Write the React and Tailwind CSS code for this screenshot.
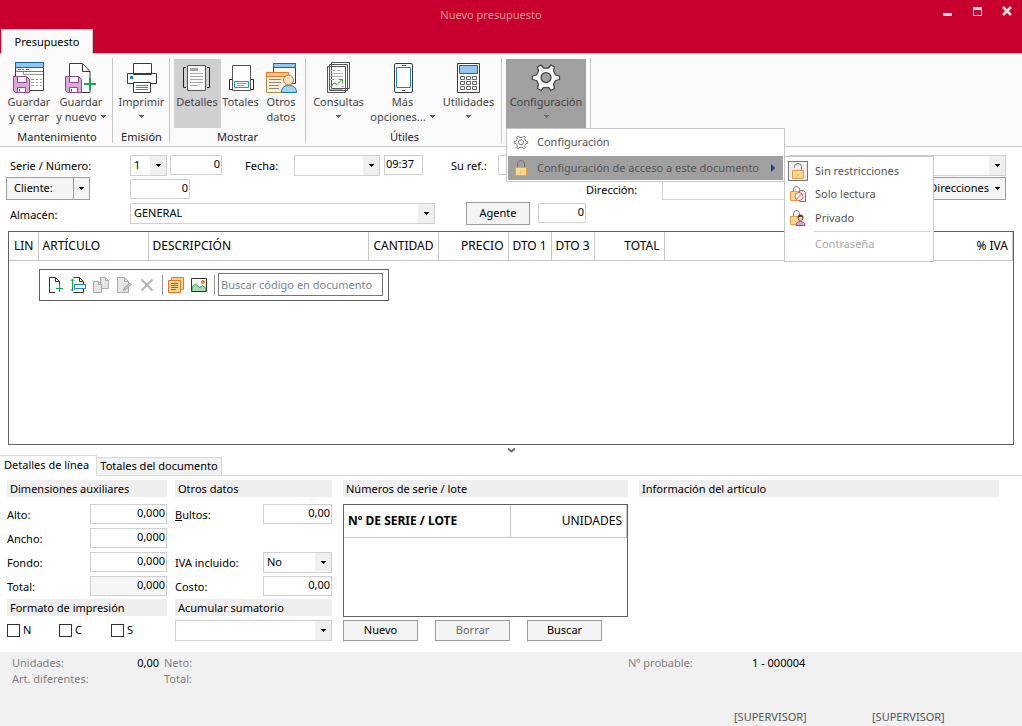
import React, { useState } from 'react';

const INK = '#3a3a3a';

const Caret = ({ className = '' }) => (
    <svg viewBox="0 0 5 3" className={`w-[5px] h-[3px] shrink-0 ${className}`} fill="currentColor" shapeRendering="crispEdges">
        <path d="M0 0h5v1H0zM1 1h3v1H1zM2 2h1v1H2z" />
    </svg>
);

// ---------- Iconos de la cinta (32px) ----------
const Icon32 = ({ children }) => (
    <svg viewBox="0 0 32 32" className="w-8 h-8 shrink-0 mb-px" fill="none" strokeWidth="1">
        {children}
    </svg>
);

const Floppy = () => (
    <g>
        <path d="M.5 15.500h13l3 3v13h-14l-2-2z" fill="#dea6dc" stroke="#93498f" />
        <path d="M4.500 15.500h9v6h-9z" fill="#fff" stroke="#93498f" />
        <path d="M4.500 26.500h8v5h-8z" fill="#fff" stroke="#93498f" />
        <path d="M6.500 28v2.500" stroke="#555" />
    </g>
);

const SaveCloseIcon = () => (
    <Icon32>
        <path d="M2.500 1.500h28v28h-28z" fill="#fff" stroke={INK} />
        <path d="M2.500 1.500h28v5h-28z" fill="#92c8f0" stroke="#1468b3" />
        <path d="M5 8.500h3M9 8.500h2M13 8.500h3M3 10.500h27" stroke="#777" />
        <path d="M10.500 11v3M10 13.500h20M18 18.500h3M23 18.500h2M27 18.500h2M18 21.500h3M23 21.500h2M27 21.500h2M18 24.500h3M23 24.500h2M27 24.500h2" stroke="#999" />
        <Floppy />
    </Icon32>
);

const SaveNewIcon = () => (
    <Icon32>
        <path d="M4.500 2.500h13l7.500 8v21H4.500z" fill="#fff" stroke={INK} />
        <path d="M17.500 2.500v8H25" stroke={INK} />
        <path d="M22 17h5v10h-5z" fill="#fff" />
        <Floppy />
        <path d="M25 17v12M19 23h12" stroke="#12a84c" strokeWidth="2" />
    </Icon32>
);

const PrintIcon = () => (
    <Icon32>
        <path d="M7.500 2.500h18v11h-18zM1.500 12.500h29v10h-29z" fill="#fff" stroke={INK} />
        <path d="M4 15h3v3H4z" fill="#1b82c6" />
        <path d="M7.500 21.500h17v10h-17z" fill="#fff" stroke={INK} />
        <path d="M10 24.500h12M10 26.500h12M10 28.500h12" stroke="#777" />
    </Icon32>
);

const DetailsIcon = () => (
    <Icon32>
        <path d="M6.500 4.500h18v25h-18z" fill="#f8f8f8" stroke="#555" />
        <path d="M9 7h8v3H9z" fill="#a5a5a5" />
        <path d="M9 12.500h13M9 15.500h13M9 18.500h13M9 21.500h13M9 24.500h8" stroke="#aaa" />
        <path d="M5 6.500H2.500v20H5M26 6.500h2.500v20H26" stroke="#222" />
    </Icon32>
);

const TotalsIcon = () => (
    <Icon32>
        <path d="M7.500 4.500h18v25h-18z" fill="#fff" stroke="#555" />
        <path d="M9.500 20.500h14v6h-14z" stroke="#129bd8" />
        <path d="M12 22.500h9M12 24.500h7" stroke="#999" />
        <path d="M7 18.500H4.500v10H7M26 18.500h2.500v10H26" stroke="#222" />
    </Icon32>
);

const OtherDataIcon = () => (
    <Icon32>
        <path d="M8.500 2.500h22v20h-22z" fill="#fff" stroke={INK} />
        <path d="M8.500 2.500h22v4h-22z" fill="#92c8f0" stroke="#1468b3" />
        <path d="M1.500 11.500h22v20h-22z" fill="#fdf0d2" stroke="#b98e4d" />
        <path d="M1.500 11.500h22v4h-22z" fill="#fcc580" stroke="#e8762b" />
        <path d="M4 18.500h12M4 21.500h12M4 24.500h10M4 27.500h10" stroke="#888" />
        <path d="M16.500 31.500c0-5 3-7 7.500-7s7.500 2 7.500 7z" fill="#a5d0f2" stroke="#1b75b5" />
        <circle cx="23.500" cy="19" r="5" fill="#f9dfc0" stroke="#b87a45" />
    </Icon32>
);

const QueriesIcon = () => (
    <Icon32>
        <path d="M8.500 1.500h18v26h-18zM6.500 3.500h18v26h-18zM4.500 5.500h18v26h-18z" fill="#fff" stroke="#555" />
        <path d="M7 9.500h5M14 9.500h3M7 12.500h13M7 15.500h13M7 18.500h4M18 25.500h3M7 28.500h13" stroke="#b5b5b5" />
        <path d="M7.500 26l3.500-4 3 1.500 5-5M15.500 18.500h4v4" stroke="#35a02f" />
    </Icon32>
);

const PhoneIcon = () => (
    <Icon32>
        <rect x="7.500" y="2.500" width="18" height="29" rx="1.500" fill="#fff" stroke={INK} />
        <path d="M9.500 6.500h14v20h-14z" fill="#fff" stroke="#1b82c6" />
        <path d="M15 4.500h4M15 29.500h3" stroke="#555" />
    </Icon32>
);

const CalculatorIcon = () => (
    <Icon32>
        <path d="M4.500 2.500h22v29h-22z" fill="#fff" stroke={INK} />
        <path d="M6.500 4.500h18v8h-18z" fill="#92c8f0" stroke="#1468b3" />
        <path
            d="M7.500 15.500h4v3h-4zM13.500 15.500h4v3h-4zM19.500 15.500h4v3h-4zM7.500 20.500h4v3h-4zM13.500 20.500h4v3h-4zM19.500 20.500h4v3h-4zM7.500 25.500h4v3h-4zM13.500 25.500h4v3h-4zM19.500 25.500h4v3h-4z"
            stroke="#666"
        />
    </Icon32>
);

const GearShape = ({ stroke, hole, strokeWidth }) => (
    <g stroke={stroke} strokeWidth={strokeWidth} strokeLinejoin="round">
        <path
            d="M2.500 15L6.500 14 8.500 10 7.500 6 11 4 13.500 7H18.500L21 4 24.500 6 23.500 10 25.500 14 29.500 15V18.500L25.500 19.500 23.500 23 24.500 27.500 21 29.500 18.500 26.500H13.500L11 29.500 7.500 27.500 8.500 23 6.500 19.500 2.500 18.500z"
            fill="#fff"
        />
        <circle cx="16" cy="16.500" r="5" fill={hole} />
    </g>
);

// ---------- Iconos pequeños (16px) ----------
const Icon16 = ({ children }) => (
    <svg viewBox="0 0 16 16" className="w-4 h-4 shrink-0" fill="none" strokeWidth="1">
        {children}
    </svg>
);

const PagePlusIcon = () => (
    <Icon16>
        <path d="M8 15.500H2.500V.5h6l4 4V8M8.500.5v4h4" stroke="#333" />
        <path d="M12.500 8v7M9 11.500h7" stroke="#12a84c" />
    </Icon16>
);

const InsertLineIcon = () => (
    <Icon16>
        <path d="M3.500.5h6l4 4V7M9.500.5v4h4M3.500 15.500h10V12" stroke="#333" />
        <path d="M2.500 2v12M.5 4l2-2 2 2M.5 12l2 2 2-2" stroke="#12a84c" />
        <path d="M4.500 7.500h11v4h-11z" fill="#fff" stroke="#1b82d6" />
    </Icon16>
);

const CopyPagesIcon = () => (
    <Icon16>
        <path d="M7.500.5h5l3 3v8h-8z" fill="#e6e6e6" stroke="#aaa" />
        <path d="M12.500.5v3h3" stroke="#aaa" />
        <path d="M.5 4.500h5l3 3v8h-8z" fill="#e6e6e6" stroke="#aaa" />
        <path d="M5.500 4.500v3h3" stroke="#aaa" />
    </Icon16>
);

const EditPageIcon = () => (
    <Icon16>
        <path d="M1.500.5h7l4 4v11h-11z" fill="#e6e6e6" stroke="#aaa" />
        <path d="M8.500.5v4h4" stroke="#aaa" />
        <path d="M7.500 13.500l1-2.500 5-5 1.500 1.500-5 5z" fill="#ccc" stroke="#999" />
    </Icon16>
);

const DeleteIcon = () => (
    <Icon16>
        <path d="M2.500 2.500l11 11M13.500 2.500l-11 11" stroke="#b5b5b5" strokeWidth="2" />
    </Icon16>
);

const NotesIcon = () => (
    <Icon16>
        <path d="M3.500.5h12v12h-12z" fill="#fbd189" stroke="#e8762b" />
        <path d="M.5 3.500h12v12H.5z" fill="#fbd98f" stroke="#e8762b" />
        <path d="M3 6.500h7M3 8.500h7M3 10.500h7M3 12.500h5" stroke="#8a6a2d" />
    </Icon16>
);

const ImageIcon = () => (
    <Icon16>
        <path d="M.5 1.500h15v13H.5z" fill="#fff" />
        <path d="M1 10l3.500-3 4 3.500 3-2 3.500 3v3H1z" fill="#a7dcb4" stroke="#2b9f55" />
        <circle cx="12" cy="5" r="2" fill="#ee7f3a" />
        <path d="M.5 1.500h15v13H.5z" stroke="#333" />
    </Icon16>
);

const LockBody = ({ open }) => (
    <g>
        <path d={open ? 'M4.500 4.500v-1a3.500 3 0 017 0V7' : 'M4.500 7V4a3.500 3.500 0 017 0v3'} stroke="#777" />
        <path d="M2.500 7.500h11v8h-11z" fill="#fbd98f" stroke="#e99a4d" />
        <path d="M8 11v2" stroke="#e99a4d" />
    </g>
);

const ReadOnlyIcon = () => (
    <Icon16>
        <path d="M3.500 6V3.500a3 3 0 016 0V6" stroke="#777" />
        <path d="M.5 5.500h9v9h-9z" fill="#fbd98f" stroke="#e99a4d" />
        <path d="M9.500 4.500h4l2 2v9h-6z" fill="#eee" stroke="#777" />
        <circle cx="9" cy="10.500" r="4" fill="#fff" stroke="#df5a4e" />
        <path d="M6.500 13l5-5" stroke="#df5a4e" />
    </Icon16>
);

const PrivateIcon = () => (
    <Icon16>
        <path d="M3.500 6V3.500a3 3 0 016 0V6" stroke="#777" />
        <path d="M.5 6.500h9v8h-9z" fill="#fbd98f" stroke="#e99a4d" />
        <path d="M6 15.500c0-3 2-4 4.500-4s4.500 1 4.500 4z" fill="#d7a3dc" stroke="#93498f" />
        <circle cx="10.500" cy="8" r="2.500" fill="#f9cfb5" stroke="#8a5a45" />
        <path d="M7.500 7.500c0-4 6-4 6 0-2 0-3-1-3-1s-1 1-3 1z" fill="#444" />
    </Icon16>
);

// ---------- Cinta ----------
const RibbonGroup = ({ title, width, children }) => (
    <div className={`flex flex-col shrink-0 mt-1 mb-[3px] h-[85px] border-r border-[#c6c6c6] ${width}`}>
        <div className="flex justify-center h-[70px] pt-px">{children}</div>
        <div className="h-[15px] leading-[18px] text-center text-[#222]">{title}</div>
    </div>
);

const RibbonButton = ({ icon, lines, width, caret, className = '' }) => (
    <button className={`flex flex-col items-center pt-0.5 text-[#444] leading-[15px] whitespace-nowrap ${width} ${className}`}>
        {icon}
        <span>{lines[0]}</span>
        <span className="flex items-center justify-center gap-1 h-[15px]">
            {lines[1]}
            {caret && <Caret className="text-[#666]" />}
        </span>
    </button>
);

// ---------- Controles ----------
const Field = ({ label, className = '', ...props }) => (
    <input
        aria-label={label}
        className={`h-5 min-w-0 border border-[#d0d0d0] bg-white px-1 pb-1 text-[11px] text-black outline-none ${className}`}
        {...props}
    />
);

const NumberField = ({ id, label, value, className = '' }) => (
    <input
        id={id}
        aria-label={label}
        defaultValue={value}
        className={`h-5 min-w-0 border border-[#d0d0d0] px-px pb-1 text-right text-[11px] text-black outline-none ${className}`}
    />
);

const Combo = ({ id, label, options = [''], className = '' }) => (
    <div className={`relative ${className}`}>
        <select id={id} aria-label={label} className="block w-full h-[21px] appearance-none border border-[#d0d0d0] bg-white pl-[3px] text-[11px] text-black outline-none">
            {options.map((o) => <option key={o}>{o}</option>)}
        </select>
        <span className="absolute right-px top-px bottom-px w-4 flex items-center justify-center bg-[#efefef] pointer-events-none">
            <Caret />
        </span>
    </div>
);

const Button = ({ children, className = '' }) => (
    <button type="button" className={`border border-[#9c9c9c] bg-[#f4f4f4] text-center whitespace-nowrap ${className}`}>{children}</button>
);

const SectionTitle = ({ children, className = '' }) => (
    <h2 className={`h-[17px] leading-[17px] bg-[#eeeeee] px-[3px] whitespace-nowrap ${className}`}>{children}</h2>
);

const COLUMNS = [
    { name: 'LIN', width: 'w-[29px]', align: 'text-right' },
    { name: 'ARTÍCULO', width: 'w-[110px]', align: 'text-left' },
    { name: 'DESCRIPCIÓN', width: 'w-[220px]', align: 'text-left' },
    { name: 'CANTIDAD', width: 'w-[70px]', align: 'text-right' },
    { name: 'PRECIO', width: 'w-[70px]', align: 'text-right' },
    { name: 'DTO 1', width: 'w-[43px]', align: 'text-right' },
    { name: 'DTO 3', width: 'w-[43px]', align: 'text-right' },
    { name: 'TOTAL', width: 'w-[70px]', align: 'text-right' },
    { name: '% IVA', width: '', align: 'text-right' },
];

const TOOLS = [
    { name: 'Nueva línea', icon: <PagePlusIcon /> },
    { name: 'Insertar línea', icon: <InsertLineIcon /> },
    { name: 'Duplicar línea', icon: <CopyPagesIcon />, disabled: true },
    { name: 'Modificar línea', icon: <EditPageIcon />, disabled: true },
    { name: 'Borrar línea', icon: <DeleteIcon />, disabled: true },
];

const DIMENSIONS = ['Alto', 'Ancho', 'Fondo', 'Total'];

const Header = () => (
    <header className="relative flex flex-col justify-end h-[54px] bg-[#c8002d] border-b border-[#c6c6c6]">
        <h1 className="absolute top-0 left-0 right-0 pr-10 text-center leading-[30px] text-[#cf9a9a]">Nuevo presupuesto</h1>
        <div className="absolute top-1.5 right-2.5 flex gap-5 text-[#dedede]">
            <button aria-label="Minimizar" className="w-2.5 h-3">
                <svg viewBox="0 0 10 12" className="w-2.5 h-3"><path d="M1 7h9v3H1z" fill="currentColor" /></svg>
            </button>
            <button aria-label="Maximizar" className="w-2.5 h-3">
                <svg viewBox="0 0 10 12" className="w-2.5 h-3"><path d="M1 1h9v9H1zM2 4v5h7V4z" fill="currentColor" fillRule="evenodd" /></svg>
            </button>
            <button aria-label="Cerrar" className="w-2.5 h-3">
                <svg viewBox="0 0 10 12" className="w-2.5 h-3"><path d="M1 1l8 8M9 1L1 9" fill="none" stroke="currentColor" strokeWidth="2.5" /></svg>
            </button>
        </div>
        <button className="w-[92px] h-[25px] -mb-px ml-px bg-[#fafafa] border-t border-x border-[#c6c6c6]">Presupuesto</button>
    </header>
);

const ConfigMenu = () => (
    <div className="absolute z-10 top-[69px] left-0 w-[279px] border border-[#c6c6c6] bg-white p-px text-left text-[#555]">
        <button className="flex items-center w-full h-6 mb-0.5 pl-[5px] gap-2">
            <svg viewBox="0 0 32 32" className="w-4 h-4 shrink-0"><GearShape stroke="#777" hole="#fff" strokeWidth="2" /></svg>
            <span>Configuración</span>
        </button>
        <button className="flex items-center w-full h-6 pl-[5px] gap-2 bg-[#a0a0a0] whitespace-nowrap">
            <Icon16><LockBody /></Icon16>
            <span className="flex-1 text-left">Configuración de acceso a este documento</span>
            <svg viewBox="0 0 4 8" className="w-1 h-2 mr-2"><path d="M0 0l4 4-4 4z" fill="#103f96" /></svg>
        </button>
        <div className="absolute top-[27px] left-[277px] w-[150px] h-[106px] border border-[#c6c6c6] bg-white p-[3px]">
            <button className="flex items-center gap-[7px] w-full h-[22px]">
                <span className="flex items-center justify-center w-5 h-5 border border-[#777] bg-[#eee]"><Icon16><LockBody open /></Icon16></span>
                Sin restricciones
            </button>
            <button className="flex items-center gap-[9px] w-full h-6 pl-0.5"><ReadOnlyIcon />Solo lectura</button>
            <button className="flex items-center gap-[9px] w-full h-6 pl-0.5"><PrivateIcon />Privado</button>
            <div className="ml-[26px] mt-px border-t border-[#d0d0d0]" />
            <button disabled className="block h-6 pl-[27px] text-[#aaa]">Contraseña</button>
        </div>
    </div>
);

const Ribbon = () => (
    <div className="flex bg-[#fafafa] border-b border-[#c6c6c6]">
        <RibbonGroup title="Mantenimiento" width="w-[113px] pl-0.5">
            <RibbonButton icon={<SaveCloseIcon />} lines={['Guardar', 'y cerrar']} width="w-12" />
            <RibbonButton icon={<SaveNewIcon />} lines={['Guardar', 'y nuevo']} width="w-14" caret />
        </RibbonGroup>
        <RibbonGroup title="Emisión" width="w-[57px] pl-px">
            <RibbonButton icon={<PrintIcon />} lines={['Imprimir']} width="w-12" caret />
        </RibbonGroup>
        <RibbonGroup title="Mostrar" width="w-[136px]">
            <RibbonButton icon={<DetailsIcon />} lines={['Detalles']} width="w-[47px]" className="bg-[#d0d0d0]" />
            <RibbonButton icon={<TotalsIcon />} lines={['Totales']} width="w-10" />
            <RibbonButton icon={<OtherDataIcon />} lines={['Otros', 'datos']} width="w-[41px]" />
        </RibbonGroup>
        <RibbonGroup title="Útiles" width="w-[196px] pl-0.5">
            <RibbonButton icon={<QueriesIcon />} lines={['Consultas']} width="w-14" caret />
            <RibbonButton icon={<PhoneIcon />} lines={['Más', 'opciones...']} width="w-[72px]" caret />
            <RibbonButton icon={<CalculatorIcon />} lines={['Utilidades']} width="w-[60px]" caret />
        </RibbonGroup>
        <RibbonGroup title="" width="w-[89px]">
            <div className="relative flex">
                <RibbonButton
                    icon={<Icon32><GearShape stroke="#444" hole="#a0a0a0" strokeWidth="1.25" /></Icon32>}
                    lines={['Configuración']}
                    width="w-20"
                    caret
                    className="bg-[#a0a0a0]"
                />
                <ConfigMenu />
            </div>
        </RibbonGroup>
    </div>
);

const DocumentForm = () => (
    <form className="flex flex-col gap-px pt-2 pr-4 pb-1.5">
        <div className="flex items-start h-[21px]">
            <label htmlFor="serie" className="w-[120px] ml-2.5 leading-[22px]">Serie / Número:</label>
            <Combo id="serie" options={['1']} className="w-[37px]" />
            <NumberField label="Número" value="0" className="w-[52px] ml-[3px]" />
            <label htmlFor="fecha" className="w-[49px] ml-[23px] leading-[22px]">Fecha:</label>
            <Combo id="fecha" className="w-[86px]" />
            <Field label="Hora" defaultValue="09:37" className="w-[39px] ml-1 px-px" />
            <label htmlFor="ref" className="w-[47px] ml-7 leading-[22px]">Su ref.:</label>
            <Field id="ref" className="flex-1 mr-2" />
            <Combo label="Tarifa" className="w-[217px]" />
        </div>
        <div className="flex items-start h-[23px]">
            <div className="flex w-[84px] h-[23px] ml-1.5 border border-[#9c9c9c] bg-[#f4f4f4]">
                <button type="button" className="flex-1 pl-[7px] text-left">Cliente:</button>
                <button type="button" aria-label="Opciones de cliente" className="flex items-center justify-center w-4 border-l border-[#9c9c9c]"><Caret /></button>
            </div>
            <NumberField label="Cliente" value="0" className="w-[60px] ml-10 mt-0.5" />
            <label htmlFor="direccion" className="w-[76px] ml-[396px] leading-[26px]">Dirección:</label>
            <Field id="direccion" className="flex-1 mr-2 h-[23px]" />
            <Button className="flex items-center justify-end gap-1.5 w-[86px] h-[23px] pr-[5px]">Direcciones<Caret /></Button>
        </div>
        <div className="flex items-start h-6 pt-px">
            <label htmlFor="almacen" className="w-[120px] ml-2.5 leading-[26px]">Almacén:</label>
            <Combo id="almacen" options={['GENERAL']} className="w-[305px] mt-px" />
            <Button className="w-16 h-[23px] ml-[31px]">Agente</Button>
            <NumberField label="Agente" value="0" className="w-12 ml-2 mt-px" />
        </div>
    </form>
);

const LinesTable = () => (
    <section className="mx-2 h-[214px] border border-[#606060]">
        <table className="w-full table-fixed border-collapse text-xs">
            <thead>
                <tr className="h-7 border-b border-[#c6c6c6]">
                    {COLUMNS.map((c) => (
                        <th key={c.name} className={`border-r border-[#c6c6c6] px-1 font-normal whitespace-nowrap ${c.width} ${c.align}`}>{c.name}</th>
                    ))}
                </tr>
            </thead>
        </table>
        <div className="inline-flex items-center h-8 ml-[30px] mt-2 pl-[7px] pr-[5px] border border-[#606060]">
            <div className="flex gap-[7px]">
                {TOOLS.map((t) => (
                    <button key={t.name} aria-label={t.name} disabled={t.disabled}>{t.icon}</button>
                ))}
            </div>
            <div className="flex gap-[7px] ml-[7px] pl-[5px] pr-[7px] py-0.5 border-x border-[#999]">
                <button aria-label="Notas"><NotesIcon /></button>
                <button aria-label="Imagen"><ImageIcon /></button>
            </div>
            <input
                aria-label="Buscar código en documento"
                placeholder="Buscar código en documento"
                className="w-[165px] h-[23px] ml-[3px] border border-[#777] px-0.5 text-[11px] placeholder:text-[#76839a] outline-none"
            />
        </div>
    </section>
);

const LineDetails = () => (
    <section className="flex items-start gap-2 pt-1 pl-[7px] pr-[23px] pb-[11px]">
        <div className="w-[160px]">
            <SectionTitle>Dimensiones auxiliares</SectionTitle>
            <div className="flex flex-col gap-1 mt-[7px] mb-[3px]">
                {DIMENSIONS.map((name) => (
                    <div key={name} className="flex justify-between h-5">
                        <label htmlFor={name} className="leading-[22px]">{name}:</label>
                        <NumberField id={name} value="0,000" className={name === 'Total' ? 'w-[77px] bg-[#f6f6f6]' : 'w-[77px]'} />
                    </div>
                ))}
            </div>
            <SectionTitle>Formato de impresión</SectionTitle>
            <div className="flex mt-2">
                {['N', 'C', 'S'].map((name) => (
                    <label key={name} className="flex items-center gap-[3px] w-[52px] h-[13px]">
                        <input type="checkbox" className="appearance-none w-[13px] h-[13px] border border-[#333] bg-white checked:bg-[#333]" />
                        {name}
                    </label>
                ))}
            </div>
        </div>
        <div className="w-[157px]">
            <SectionTitle>Otros datos</SectionTitle>
            <div className="flex flex-col gap-1 mt-[7px] mb-[3px]">
                <div className="flex justify-between h-5 mb-6">
                    <label htmlFor="bultos" className="leading-[22px]"><u>B</u>ultos:</label>
                    <NumberField id="bultos" value="0,00" className="w-[69px]" />
                </div>
                <div className="flex justify-between h-5">
                    <label htmlFor="iva" className="leading-[22px]">IVA incluido:</label>
                    <Combo id="iva" options={['No']} className="w-[69px]" />
                </div>
                <div className="flex justify-between h-5">
                    <label htmlFor="costo" className="leading-[22px]">Costo:</label>
                    <NumberField id="costo" value="0,00" className="w-[69px]" />
                </div>
            </div>
            <SectionTitle>Acumular sumatorio</SectionTitle>
            <div className="flex items-center mt-1">
                <Combo label="Acumular sumatorio" className="w-full" />
            </div>
        </div>
        <div className="w-[285px] ml-[3px]">
            <SectionTitle>Números de serie / lote</SectionTitle>
            <div className="h-[113px] mt-[7px] border border-[#606060]">
                <table className="w-full table-fixed border-collapse text-xs">
                    <thead>
                        <tr className="h-8 border-b border-[#c6c6c6]">
                            <th className="w-[166px] px-1 border-r border-[#c6c6c6] text-left font-bold">Nº DE SERIE / LOTE</th>
                            <th className="px-1 border-r border-[#c6c6c6] text-right font-normal">UNIDADES</th>
                        </tr>
                    </thead>
                </table>
            </div>
            <div className="flex gap-[17px] mt-[3px]">
                <Button className="w-[75px] h-[21px]">Nuevo</Button>
                <Button className="w-[75px] h-[21px] text-[#666]">Borrar</Button>
                <Button className="w-[75px] h-[21px]">Buscar</Button>
            </div>
        </div>
        <SectionTitle className="flex-1 ml-[3px]">Información del artículo</SectionTitle>
    </section>
);

const Footer = () => (
    <footer className="flex flex-col flex-1 bg-[#f0f0f0] pt-[3px] text-[#808080]">
        <div className="flex pl-3 leading-4">
            <div className="w-[120px]">Unidades:<br />Art. diferentes:</div>
            <div className="w-[27px] text-right text-black">0,00</div>
            <div className="w-[464px] pl-[5px]">Neto:<br />Total:</div>
            <div className="w-[129px] pl-[5px]">Nº probable:</div>
            <div className="text-black">1 - 000004</div>
        </div>
        <div className="flex mt-auto pl-[734px] leading-[18px] text-[#555]">
            <span className="w-[138px]">[SUPERVISOR]</span>
            <span>[SUPERVISOR]</span>
        </div>
    </footer>
);

function App() {
    const [tab, setTab] = useState('lineas');

    return (
        <div className="flex flex-col min-h-screen bg-white text-black text-[11px] font-['Noto_Sans','Open_Sans',sans-serif]">
            <Header />
            <Ribbon />
            <main>
                <DocumentForm />
                <LinesTable />
                <div className="flex justify-center h-2.5 items-center">
                    <svg viewBox="0 0 7 5" className="w-[7px] h-[5px]"><path d="M0 .5l3.500 3L7 .5" fill="none" stroke="#666" strokeWidth="2" /></svg>
                </div>
                <div className="flex items-end h-[21px] border-b border-[#d9d9d9]">
                    <button
                        onClick={() => setTab('lineas')}
                        className={`w-[97px] h-[21px] -mb-px pl-1 pb-px text-left border-t border-r border-[#d9d9d9] whitespace-nowrap ${tab === 'lineas' ? 'bg-white' : 'bg-[#f2f2f2]'}`}
                    >
                        Detalles de línea
                    </button>
                    <button
                        onClick={() => setTab('totales')}
                        className={`w-[125px] h-[18px] border-t border-r border-[#d9d9d9] whitespace-nowrap ${tab === 'totales' ? 'bg-white' : 'bg-[#f2f2f2]'}`}
                    >
                        Totales del documento
                    </button>
                </div>
                <LineDetails />
            </main>
            <Footer />
        </div>
    );
}

export default App;
